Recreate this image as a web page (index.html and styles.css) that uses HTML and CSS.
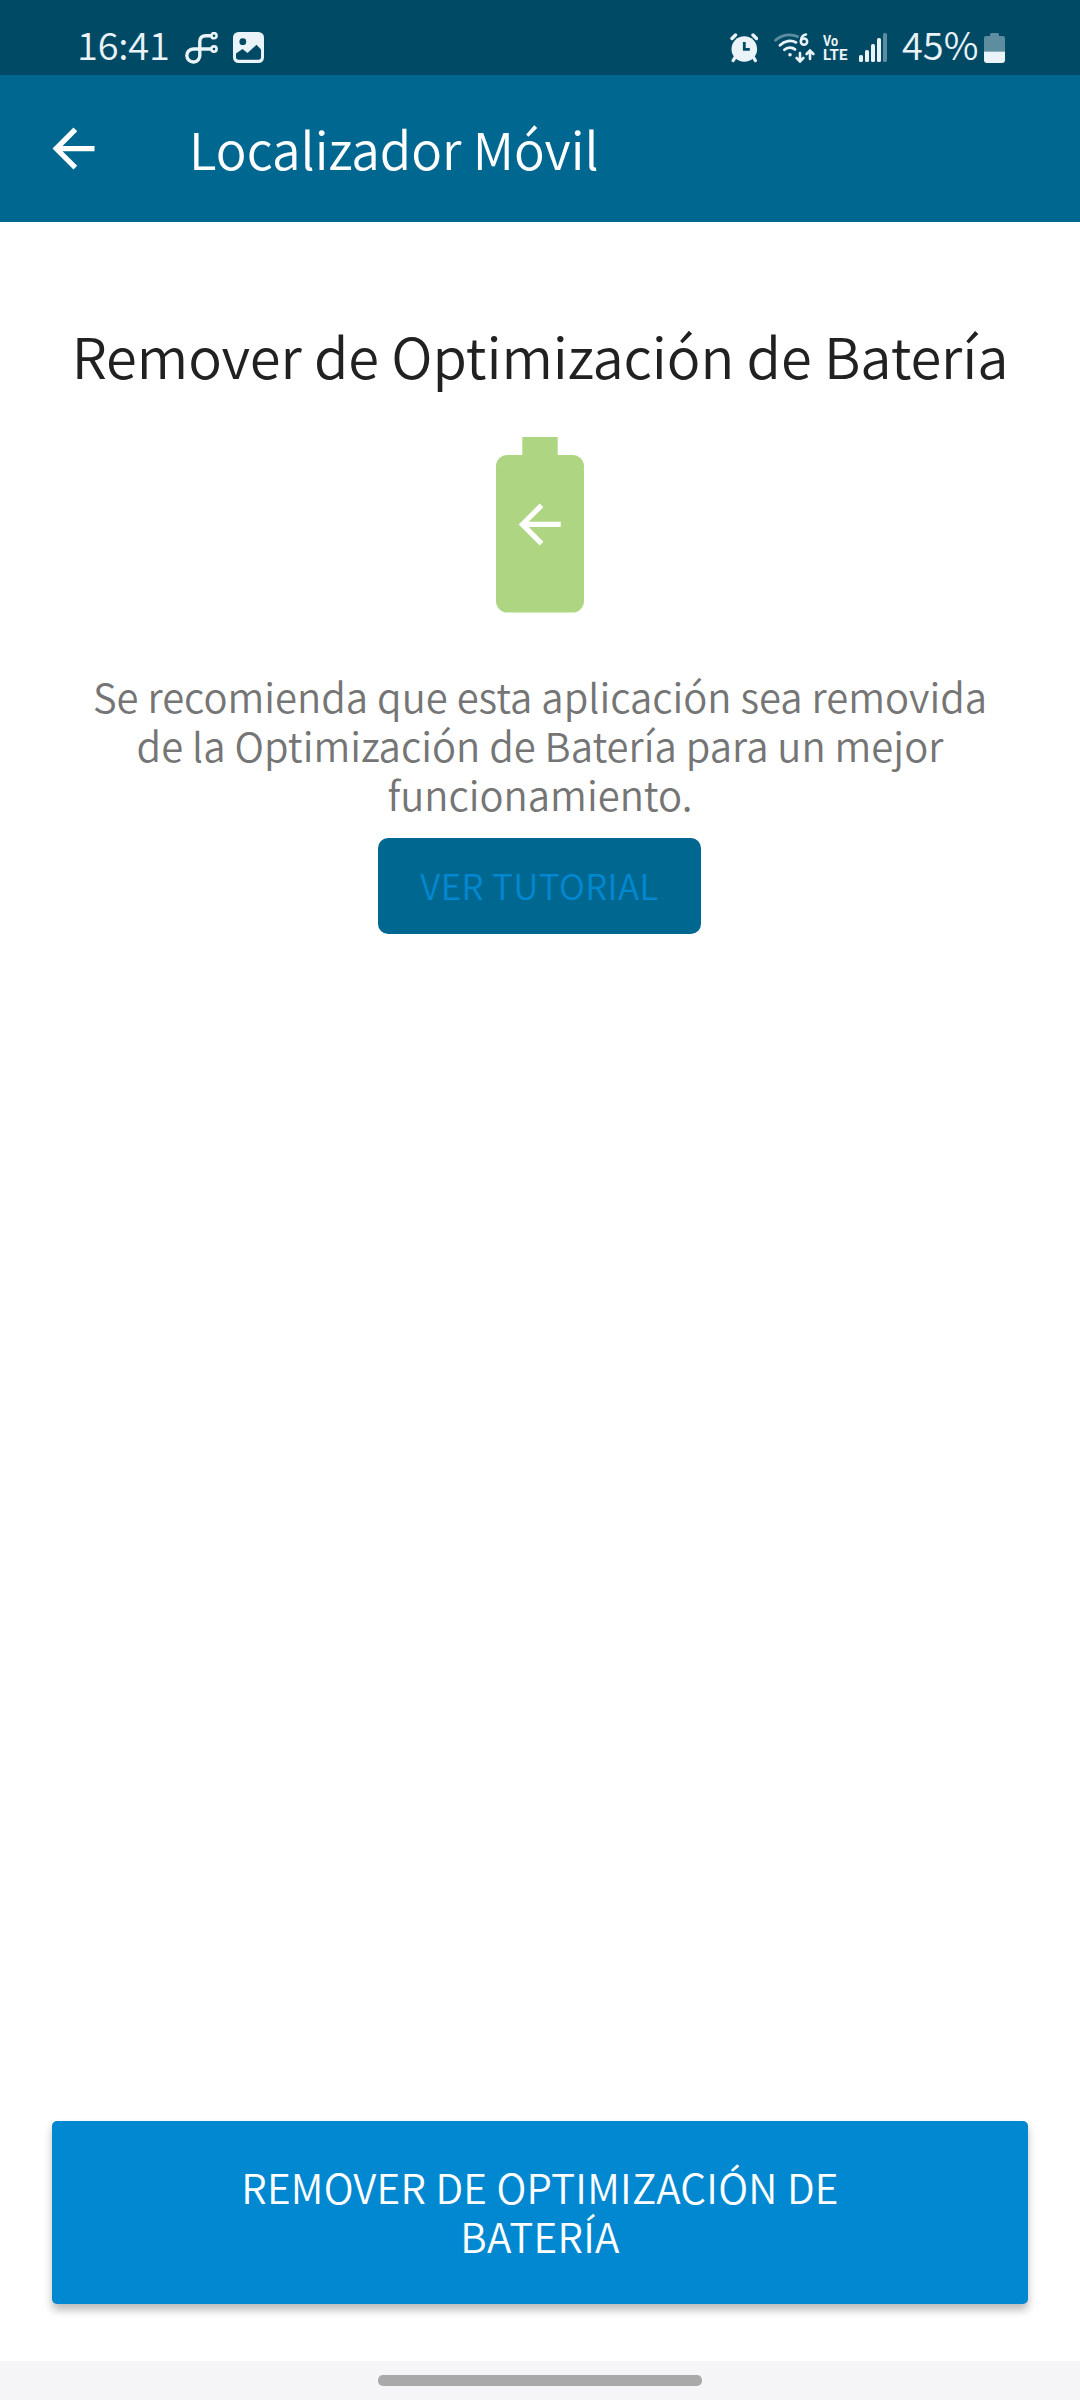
FILE: index.html
```
<!DOCTYPE html>
<html lang="es">
<head>
    <meta charset="UTF-8">
    <meta name="viewport" content="width=device-width, initial-scale=1.0">
    <title>Localizador Móvil</title>
    <link rel="stylesheet" href="styles.css">
</head>
<body>
    <div class="screen">
        <div class="status-bar">
            <span class="time">16:41</span>
            <svg class="icon-app" width="33" height="32" viewBox="0 0 33 32" fill="none" stroke="currentColor" stroke-width="3.4">
                <circle cx="29" cy="3.7" r="2.6" stroke-width="2.6"/>
                <circle cx="29" cy="17" r="2.6" stroke-width="2.6"/>
                <path d="M26 3.7H21C17 3.7 14.8 6 14.8 9.5V23A6.5 6.5 0 1 1 8.2 17H26"/>
            </svg>
            <svg width="31" height="32" viewBox="0 0 31 32">
                <rect width="31" height="31" rx="5.5" fill="currentColor"/>
                <circle cx="9.8" cy="9.7" r="3.4" fill="#004a65"/>
                <path d="M3 21.5L9.5 17L14.5 21L23.5 12.8L28 17.5V25Q28 27.8 25.2 27.8H5.8Q3 27.8 3 25Z" fill="#004a65"/>
            </svg>

            <div class="status-right">
                <svg class="icon-alarm" width="28" height="32" viewBox="0 0 28 32" stroke="currentColor" stroke-linecap="round">
                    <circle cx="14.3" cy="17" r="12.8" fill="currentColor" stroke="none"/>
                    <path d="M2 6.5L5.5 3M26.5 6.5L23 3M5 25.5L3.2 28.5M23.5 25.5L25.3 28.5" stroke-width="3.4" fill="none"/>
                    <path d="M14.3 10V17.4H19.8" stroke="#004a65" stroke-width="2.8" stroke-linecap="butt" fill="none"/>
                </svg>
                <svg class="icon-wifi" width="42" height="32" viewBox="0 0 42 32" fill="none" stroke="currentColor" stroke-width="2.8" stroke-linecap="round">
                    <path d="M1.6 8.2C7.5 2.5 16.5 1.4 23.5 4.6" opacity="0.4"/>
                    <path d="M6 13.2C10.6 8.8 17 7.8 22 10.4"/>
                    <path d="M10.4 17.8C13.4 15 18 14.7 21 17.4"/>
                    <circle cx="16" cy="22.8" r="1.8" fill="currentColor" stroke="none"/>
                    <circle cx="30" cy="9.6" r="3.2" stroke-width="2.5"/>
                    <path d="M27 8.8C27.2 5.4 28.6 2.8 32 2.4" stroke-width="2.5"/>
                    <path d="M26 21V29M22.6 26L26 29.4L29.4 26M36 27V19M32.6 22L36 18.6L39.4 22" stroke-width="2.6"/>
                </svg>
                <svg class="icon-lte" width="25" height="32" viewBox="0 0 25 32" fill="currentColor">
                    <text x="0" y="13.8" textLength="15" lengthAdjust="spacingAndGlyphs">Vo</text>
                    <text x="0" y="28" textLength="24.5" lengthAdjust="spacingAndGlyphs">LTE</text>
                </svg>
                <svg class="icon-signal" width="28" height="32" viewBox="0 0 28 32" fill="currentColor">
                    <rect x="0" y="23" width="4" height="7" rx="1.6"/>
                    <rect x="6" y="18" width="4" height="12" rx="1.6"/>
                    <rect x="12" y="12" width="4" height="18" rx="1.6"/>
                    <rect x="18" y="6" width="4" height="24" rx="1.6"/>
                    <rect x="24" y="1" width="4" height="29" rx="1.6" opacity="0.4"/>
                </svg>
                <span class="percent">45%</span>
                <svg width="21" height="32" viewBox="0 0 21 32" fill="currentColor">
                    <path d="M0 19.4V6Q0 4 2 4H6V2.5Q6 1 7.5 1H13.5Q15 1 15 2.5V4H19Q21 4 21 6V19.4Z" opacity="0.4"/>
                    <path d="M0 19.4H21V28Q21 31 18 31H3Q0 31 0 28Z"/>
                </svg>
            </div>
        </div>

        <header class="app-bar">
            <svg class="back" width="63" height="63" viewBox="0 0 24 24" fill="currentColor">
                <path d="M20 11H7.83l5.59-5.59L12 4l-8 8 8 8 1.41-1.41L7.83 13H20v-2z"/>
            </svg>
            <h1>Localizador Móvil</h1>
        </header>

        <main class="content">
            <h2>Remover de Optimización de Batería</h2>
            <svg class="battery" width="88" height="176" viewBox="0 0 88 176">
                <path d="M26.3 0H61.7V18H76.5A11.5 11.5 0 0 1 88 29.5V164A11.5 11.5 0 0 1 76.5 175.5H11.5A11.5 11.5 0 0 1 0 164V29.5A11.5 11.5 0 0 1 11.5 18H26.3Z" fill="#aed581"/>
                <path d="M64.7 84.87H32.75l14.67-14.67L43.7 66.5l-21 21 21 21 3.7-3.7L32.75 90.12H64.7z" fill="#fff"/>
            </svg>
            <p>Se recomienda que esta aplicación sea removida<br>de la Optimización de Batería para un mejor<br>funcionamiento.</p>
            <button class="btn-tutorial">VER TUTORIAL</button>
            <button class="btn-remove">REMOVER DE OPTIMIZACIÓN DE<br>BATERÍA</button>
        </main>

        <div class="nav-bar">
            <div class="nav-handle"></div>
        </div>
    </div>
</body>
</html>
```
FILE: styles.css
```
:root {
    --status: #004a65;
    --primary: #006791;
    --accent: #0288d1;
    --text: #212121;
    --muted: #757575;
}

* {
    box-sizing: border-box;
}

body {
    margin: 0;
    background: #fff;
    color: var(--text);
    font-family: "Noto Sans CJK SC", "Noto Sans", sans-serif;
    font-weight: 350;
}

svg {
    display: block;
    flex: none;
}

.screen {
    width: 1080px;
    height: 2400px;
    display: flex;
    flex-direction: column;
}

/* Status bar */
.status-bar {
    height: 75px;
    padding: 32px 75px 0 77px;
    display: flex;
    background: var(--status);
    color: #e9f3f8;
    font-size: 38px;
    line-height: 32px;
    white-space: nowrap;
}

.time {
    width: 108px;
    margin-top: -4px;
    letter-spacing: -0.2px;
}

.icon-app {
    margin-right: 15px;
}

.status-right {
    display: flex;
    margin-left: auto;
}

.icon-alarm {
    margin-right: 16px;
}

.icon-wifi {
    margin-right: 7px;
}

.icon-lte {
    margin-right: 11px;
    font: 700 15.5px Roboto, sans-serif;
}

.icon-signal {
    margin-right: 15px;
}

.percent {
    width: 82px;
    margin-top: -4px;
}

/* App bar */
.app-bar {
    height: 147px;
    padding-left: 42px;
    display: flex;
    align-items: center;
    background: var(--primary);
    color: #fff;
}

.app-bar h1 {
    margin: 0 0 2px 84px;
    font-size: 51.2px;
    font-weight: 350;
    line-height: 60px;
}

/* Content */
.content {
    flex: 1;
    padding: 93px 52px 57px;
    display: flex;
    flex-direction: column;
    align-items: center;
    text-align: center;
}

.content h2 {
    margin: 0 0 42px;
    font-size: 56px;
    font-weight: 350;
    line-height: 80px;
    letter-spacing: -0.1px;
    white-space: nowrap;
}

.content p {
    margin: 59px 0 19px;
    color: var(--muted);
    font-size: 40px;
    line-height: 49px;
    white-space: nowrap;
}

button {
    border: 0;
    font-family: inherit;
    font-weight: 350;
}

.btn-tutorial {
    width: 323px;
    height: 96px;
    margin-right: 1px;
    padding: 0 0 3px;
    border-radius: 10px;
    background: var(--primary);
    color: var(--accent);
    font-size: 35px;
    letter-spacing: 0.4px;
}

.btn-remove {
    width: 976px;
    height: 183px;
    margin-top: auto;
    padding: 0 0 3px;
    border-radius: 5px;
    background: var(--accent);
    color: #fff;
    font-size: 40.5px;
    line-height: 49px;
    letter-spacing: 0.25px;
    box-shadow: 0 6px 9px rgba(0, 0, 0, 0.27);
}

/* Navigation bar */
.nav-bar {
    height: 39px;
    padding-top: 14px;
    background: #f5f5f7;
}

.nav-handle {
    width: 324px;
    height: 11px;
    margin: 0 auto;
    border-radius: 5px;
    background: #a9a9a9;
}
```
